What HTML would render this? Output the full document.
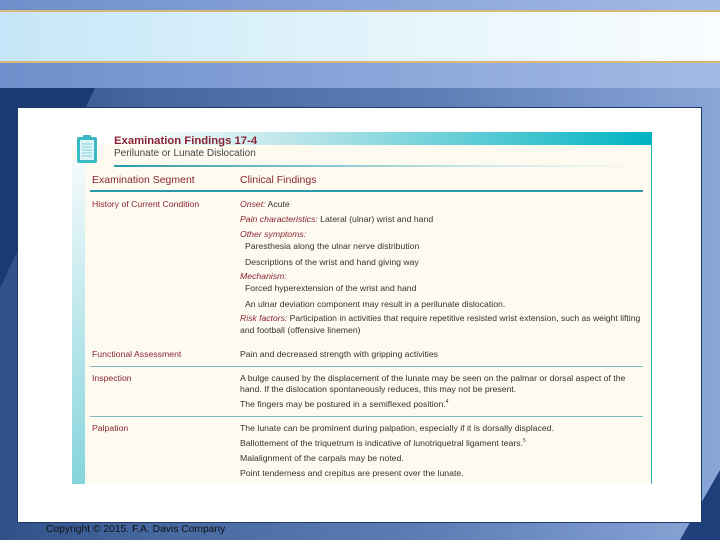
<!DOCTYPE html>
<html><head><style>
*{margin:0;padding:0}
body{width:720px;height:540px;position:relative;overflow:hidden;font-family:"Liberation Sans",sans-serif;background:linear-gradient(90deg,#6f8fcc,#a2bbe6)}
.band{position:absolute;left:0;top:10px;width:720px;height:53px;background:linear-gradient(90deg,#c5e6f8,#e2f4fb 50%,#fafdff);border-top:2px solid #d8b878;border-bottom:2px solid #d8b878;box-sizing:border-box}
.dark{position:absolute;left:0;top:88px;width:720px;height:452px;background:linear-gradient(90deg,#2f5088 0%,#45679f 20%,#5d7eb5 60%,#8aa6d8 100%)}
.navy{position:absolute;left:0;top:88px;width:100px;height:452px;background:#1c3a72;clip-path:polygon(0 0,95px 0,0 200px)}
.diag2{position:absolute;right:0;top:470px;width:0;height:0;border-left:40px solid transparent;border-bottom:70px solid #1e3f7a}
.white{position:absolute;left:17px;top:107px;width:685px;height:416px;background:#fff;border:1px solid #203a6a;box-sizing:border-box}
.tbl{position:absolute;left:72px;top:132px;width:580px;height:352px;background:#fdfaf0;border-right:1px solid #2fb0b8;box-sizing:border-box}
.hdr{position:absolute;left:72px;top:132px;width:580px;height:13px;background:linear-gradient(90deg,#fff 10%,#b6e4e8 40%,#00b3c2 100%)}
.strip{position:absolute;left:72px;top:160px;width:13px;height:324px;background:linear-gradient(180deg,#f4fafb,#86d4dc)}
.t{position:absolute;white-space:nowrap;font-size:8.7px;color:#333}
.r{color:#8a2434}
.i{font-style:italic;color:#8a2434}
.line{position:absolute;height:1px;background:#7fb7c4}
</style></head><body>
<div class="band"></div>
<div class="dark"></div>
<div class="navy"></div>
<div class="diag2"></div>
<div class="white"></div>
<div class="tbl"></div>
<div class="hdr"></div>
<div class="strip"></div>
<svg style="position:absolute;left:75px;top:134px" width="24" height="30"><rect x="2" y="3" width="20" height="26" rx="2" fill="#3ab9c4"/><rect x="5" y="6" width="14" height="20" fill="#dff4f6"/><rect x="8" y="1" width="8" height="4" rx="1" fill="#3ab9c4"/><g stroke="#7ccfd6" stroke-width="1"><line x1="7" y1="10" x2="17" y2="10"/><line x1="7" y1="13" x2="17" y2="13"/><line x1="7" y1="16" x2="17" y2="16"/><line x1="7" y1="19" x2="17" y2="19"/><line x1="7" y1="22" x2="17" y2="22"/></g></svg>
<div class="t r" style="left:114px;top:135px;font-size:11.3px;font-weight:bold">Examination Findings 17-4</div>
<div class="t" style="left:114px;top:148px;font-size:10px;color:#444">Perilunate or Lunate Dislocation</div>
<div class="line" style="left:114px;top:165px;width:530px;height:2px;background:linear-gradient(90deg,#2b9aa8,#cfe8ea 70%,#fdfaf0)"></div>
<div class="t r" style="left:92px;top:174px;font-size:10.5px">Examination Segment</div>
<div class="t r" style="left:240px;top:174px;font-size:10.5px">Clinical Findings</div>
<div class="line" style="left:90px;top:190px;width:553px;height:2px;background:#2b9aa8"></div>
<div class="t r" style="left:92px;top:199px">History of Current Condition</div>
<div class="t" style="left:240px;top:199px"><span class="i">Onset:</span> Acute</div>
<div class="t" style="left:240px;top:214px"><span class="i">Pain characteristics:</span> Lateral (ulnar) wrist and hand</div>
<div class="t" style="left:240px;top:229px"><span class="i">Other symptoms:</span></div>
<div class="t" style="left:245px;top:241px">Paresthesia along the ulnar nerve distribution</div>
<div class="t" style="left:245px;top:257px">Descriptions of the wrist and hand giving way</div>
<div class="t" style="left:240px;top:271px"><span class="i">Mechanism:</span></div>
<div class="t" style="left:245px;top:283px">Forced hyperextension of the wrist and hand</div>
<div class="t" style="left:245px;top:299px">An ulnar deviation component may result in a perilunate dislocation.</div>
<div class="t" style="left:240px;top:313px;font-size:8.6px"><span class="i">Risk factors:</span> Participation in activities that require repetitive resisted wrist extension, such as weight lifting</div>
<div class="t" style="left:240px;top:325px">and football (offensive linemen)</div>
<div class="t r" style="left:92px;top:349px">Functional Assessment</div>
<div class="t" style="left:240px;top:349px">Pain and decreased strength with gripping activities</div>
<div class="line" style="left:90px;top:366px;width:553px"></div>
<div class="t r" style="left:92px;top:373px">Inspection</div>
<div class="t" style="left:240px;top:373px">A bulge caused by the displacement of the lunate may be seen on the palmar or dorsal aspect of the</div>
<div class="t" style="left:240px;top:384px">hand. If the dislocation spontaneously reduces, this may not be present.</div>
<div class="t" style="left:240px;top:399px">The fingers may be postured in a semiflexed position.<sup style="font-size:5px">4</sup></div>
<div class="line" style="left:90px;top:416px;width:553px"></div>
<div class="t r" style="left:92px;top:423px">Palpation</div>
<div class="t" style="left:240px;top:423px">The lunate can be prominent during palpation, especially if it is dorsally displaced.</div>
<div class="t" style="left:240px;top:438px">Ballottement of the triquetrum is indicative of lunotriquetral ligament tears.<sup style="font-size:5px">5</sup></div>
<div class="t" style="left:240px;top:453px">Malalignment of the carpals may be noted.</div>
<div class="t" style="left:240px;top:468px">Point tenderness and crepitus are present over the lunate.</div>
<div class="t" style="left:46px;top:524px;font-size:10.3px;color:#111">Copyright © 2015. F.A. Davis Company</div>
</body></html>
